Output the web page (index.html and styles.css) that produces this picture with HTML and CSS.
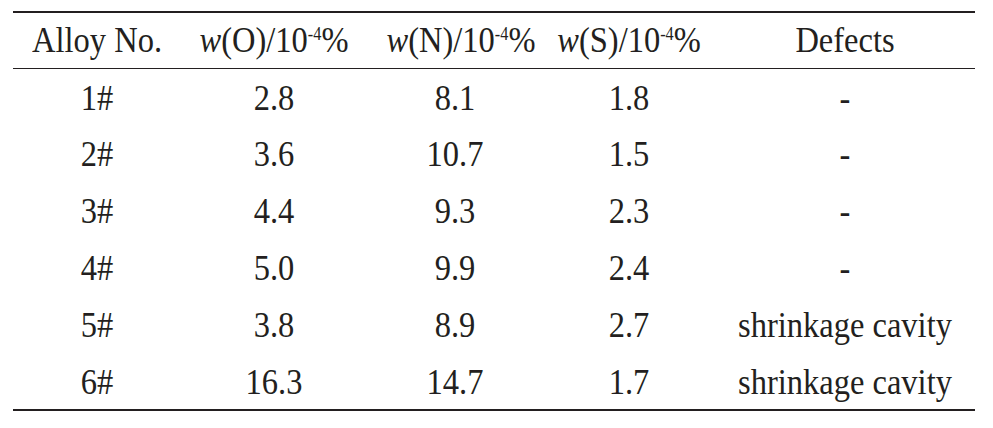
FILE: index.html
```html
<!DOCTYPE html>
<html>
<head>
<meta charset="utf-8">
<link rel="stylesheet" href="styles.css">
</head>
<body>
<table class="data">
  <colgroup>
    <col class="c1"><col class="c2"><col class="c3"><col class="c4"><col class="c5">
  </colgroup>
  <thead>
    <tr>
      <th><span class="t">Alloy No.</span></th>
      <th><span class="t"><i>w</i>(O)/10<sup>-4</sup>%</span></th>
      <th class="shift"><span class="t"><i>w</i>(N)/10<sup>-4</sup>%</span></th>
      <th><span class="t"><i>w</i>(S)/10<sup>-4</sup>%</span></th>
      <th><span class="t">Defects</span></th>
    </tr>
  </thead>
  <tbody>
    <tr><td><span class="t">1#</span></td><td><span class="t">2.8</span></td><td><span class="t">8.1</span></td><td><span class="t">1.8</span></td><td><span class="t">-</span></td></tr>
    <tr><td><span class="t">2#</span></td><td><span class="t">3.6</span></td><td><span class="t">10.7</span></td><td><span class="t">1.5</span></td><td><span class="t">-</span></td></tr>
    <tr><td><span class="t">3#</span></td><td><span class="t">4.4</span></td><td><span class="t">9.3</span></td><td><span class="t">2.3</span></td><td><span class="t">-</span></td></tr>
    <tr><td><span class="t">4#</span></td><td><span class="t">5.0</span></td><td><span class="t">9.9</span></td><td><span class="t">2.4</span></td><td><span class="t">-</span></td></tr>
    <tr><td><span class="t">5#</span></td><td><span class="t">3.8</span></td><td><span class="t">8.9</span></td><td><span class="t">2.7</span></td><td><span class="t">shrinkage cavity</span></td></tr>
    <tr><td><span class="t">6#</span></td><td><span class="t">16.3</span></td><td><span class="t">14.7</span></td><td><span class="t">1.7</span></td><td><span class="t">shrinkage cavity</span></td></tr>
  </tbody>
</table>
</body>
</html>
```
FILE: styles.css
```css
html, body {
  margin: 0;
  padding: 0;
  background: #ffffff;
}
body {
  padding: 11px 0 0 13px;
  font-family: "Liberation Serif", "Times New Roman", serif;
  color: #231f20;
}
.data {
  border-collapse: collapse;
  width: 962px;
  table-layout: fixed;
  border-top: 2px solid #231f20;
  border-bottom: 2px solid #231f20;
  font-size: 32.5px;
  font-family: "Liberation Serif", "Times New Roman", serif;
}
.c1 { width: 168px; }
.c2 { width: 186px; }
.c3 { width: 176px; }
.c4 { width: 172px; }
.c5 { width: 260px; }
.data th,
.data td {
  padding: 0;
  text-align: center;
  font-weight: normal;
  white-space: nowrap;
  line-height: 1;
}
.data th.shift {
  padding-left: 12px;
}
.data thead tr {
  height: 56px;
  border-bottom: 1.5px solid #231f20;
}
.data tbody tr {
  height: 57px;
}
.t {
  display: inline-block;
  transform: scaleY(1.11);
}
.data th .t { position: relative; top: 0; }
.data td .t { position: relative; top: 1px; }
.data sup {
  font-size: 0.5em;
  vertical-align: 0.66em;
  line-height: 0;
}
```
